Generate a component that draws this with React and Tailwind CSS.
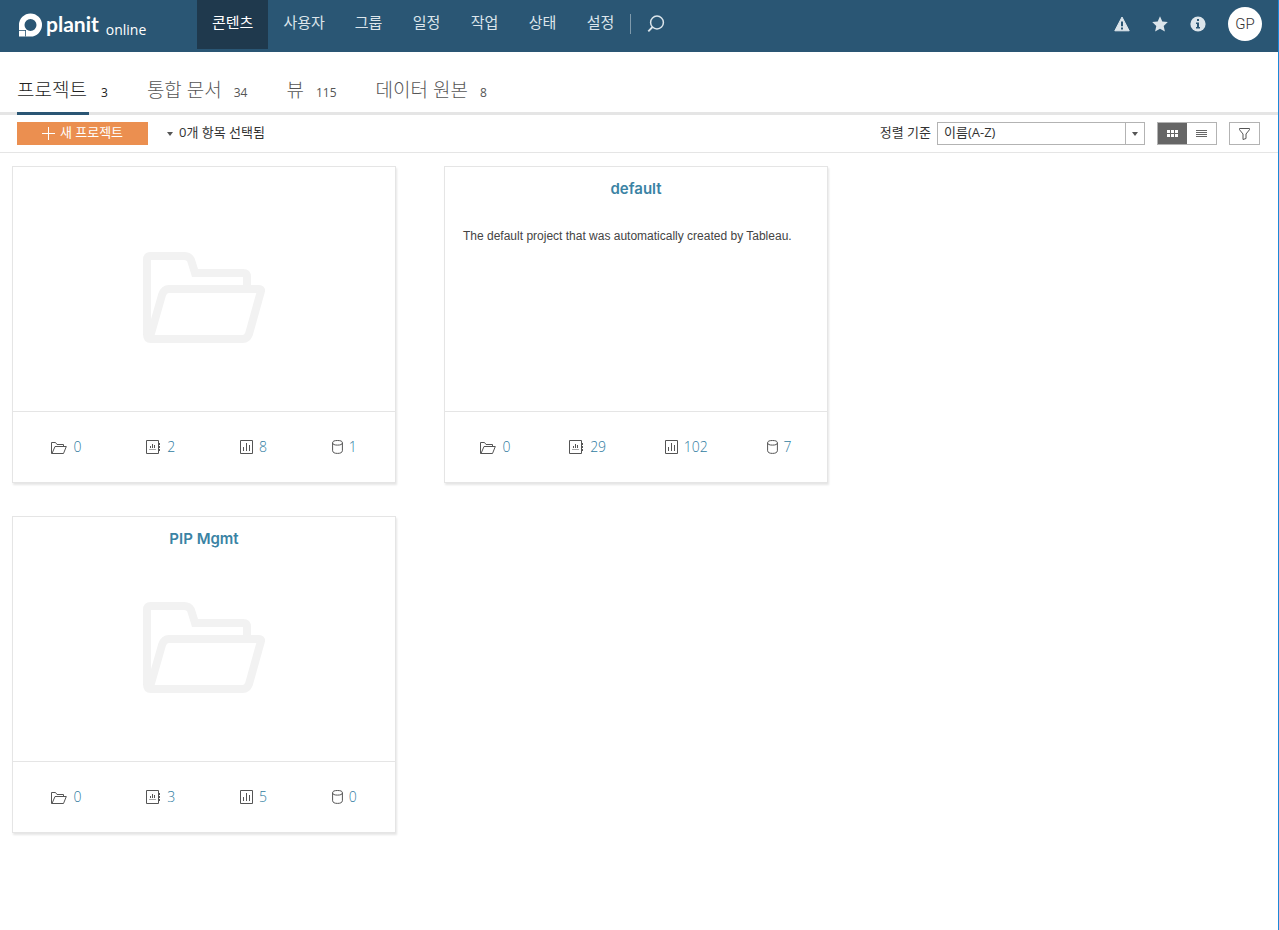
import { useState } from 'react'
import clsx from 'clsx'

/* ── Data ── */

const NAV = ['콘텐츠', '사용자', '그룹', '일정', '작업', '상태', '설정']

const TABS = [
  { label: '프로젝트', count: 3 },
  { label: '통합 문서', count: 34 },
  { label: '뷰', count: 115 },
  { label: '데이터 원본', count: 8 },
]

const PROJECTS = [
  { id: 1, name: '', folders: 0, workbooks: 2, views: 8, sources: 1 },
  {
    id: 2,
    name: 'default',
    description: 'The default project that was automatically created by Tableau.',
    folders: 0,
    workbooks: 29,
    views: 102,
    sources: 7,
  },
  { id: 3, name: 'PIP Mgmt', folders: 0, workbooks: 3, views: 5, sources: 0 },
]

/* ── Icons ── */

function LogoMark() {
  return (
    <svg width="25" height="24" viewBox="0 0 25 24" aria-hidden="true">
      <path
        fill="#fff"
        fillRule="evenodd"
        d="M12.500.500a11.500 11.500 0 0 1 0 23H1V12A11.500 11.500 0 0 1 12.500.500ZM12.500 6a6 6 0 0 0 0 12 6 6 0 0 0 0-12Z"
      />
      <path fill="none" stroke="#2a5674" strokeWidth=".8" d="M1 17.500h7M7.500 17v6.500" />
    </svg>
  )
}

function SearchIcon() {
  return (
    <svg width="18" height="18" viewBox="0 0 18 18" fill="none" stroke="#dce5eb" aria-hidden="true">
      <circle cx="10" cy="7.500" r="6.400" strokeWidth="1.500" />
      <path d="M5.500 12 1.300 16.300" strokeWidth="1.800" />
    </svg>
  )
}

function AlertIcon() {
  return (
    <svg width="16" height="16" viewBox="0 0 16 16" aria-hidden="true">
      <path
        fill="#dce5eb"
        stroke="#dce5eb"
        strokeLinejoin="round"
        d="M8 1 15.200 14.800H.800Z"
      />
      <path stroke="#2a5674" strokeWidth="2" d="M8 5.500v4.800M8 11.600v1.900" />
    </svg>
  )
}

function StarIcon() {
  return (
    <svg width="16" height="16" viewBox="0 0 16 16" aria-hidden="true">
      <path
        fill="#dce5eb"
        d="m8 .300 2.300 5.200 5.500.600-4.100 3.800 1.200 5.700L8 12.700l-4.900 2.900 1.200-5.700L.200 6.100l5.500-.600Z"
      />
    </svg>
  )
}

function InfoIcon() {
  return (
    <svg width="16" height="16" viewBox="0 0 16 16" aria-hidden="true">
      <circle cx="8" cy="8" r="7.600" fill="#dce5eb" />
      <path fill="#2a5674" d="M7 3h2v2H7zM6 6.500h3V11h1v1.500H6V11h1V8H6z" />
    </svg>
  )
}

function CaretIcon() {
  return (
    <svg width="6" height="4" viewBox="0 0 6 4" aria-hidden="true">
      <path fill="#555" d="M0 0h6L3 4Z" />
    </svg>
  )
}

function PlusIcon() {
  return (
    <svg width="13" height="13" viewBox="0 0 13 13" aria-hidden="true">
      <path stroke="#fff" d="M6.500 0v13M0 6.500h13" />
    </svg>
  )
}

function GridIcon() {
  return (
    <svg width="11" height="7" viewBox="0 0 11 7" fill="currentColor" aria-hidden="true">
      <path d="M0 0h3v3H0zM4 0h3v3H4zM8 0h3v3H8zM0 4h3v3H0zM4 4h3v3H4zM8 4h3v3H8z" />
    </svg>
  )
}

function ListIcon() {
  return (
    <svg width="11" height="7" viewBox="0 0 11 7" fill="currentColor" aria-hidden="true">
      <path d="M0 0h11v1H0zM0 2h11v1H0zM0 4h11v1H0zM0 6h11v1H0z" />
    </svg>
  )
}

function FilterIcon() {
  return (
    <svg width="11" height="12" viewBox="0 0 11 12" fill="none" stroke="#555" aria-hidden="true">
      <path strokeLinejoin="round" d="M.500.500h10v1.200L7 6v4.500L4 11.500V6L.500 1.700Z" />
    </svg>
  )
}

function BigFolderIcon() {
  return (
    <svg
      width="123"
      height="92"
      viewBox="0 0 123 92"
      fill="none"
      stroke="#f2f2f2"
      strokeWidth="8"
      aria-hidden="true"
    >
      <path d="M4 83V8q0-4 4-4h33q5 0 7 4l4 13h48q4 0 4 4v9" />
      <path
        strokeLinejoin="round"
        d="M4 80v2q0 5 4 5h92q4 0 6-5l12-43q.500-2-2-2H26q-5 0-7 6L7 85"
      />
    </svg>
  )
}

function FolderIcon() {
  return (
    <svg width="16" height="14" viewBox="0 0 16 14" fill="none" stroke="#555" aria-hidden="true">
      <path
        strokeLinejoin="round"
        d="M.500 13.500v-11h4l1.500 2h6.500v2M.500 13.500h12L15.300 6.500H4L1 13.500"
      />
    </svg>
  )
}

function WorkbookIcon() {
  return (
    <svg width="15" height="14" viewBox="0 0 15 14" fill="none" stroke="#555" aria-hidden="true">
      <path d="M.500.500h12v13H.500z" />
      <path d="M4.500 6v2M6.500 4v4M8.500 5v3" />
      <path stroke="#aaa" d="M3 9.500h7" />
      <path d="M13.500 3v2M13.500 6v2M13.500 9v2" />
    </svg>
  )
}

function ViewIcon() {
  return (
    <svg width="13" height="14" viewBox="0 0 13 14" fill="none" stroke="#555" aria-hidden="true">
      <path d="M.500.500h12v13H.500zM3.500 7v4M6.500 3v8M9.500 5v6" />
    </svg>
  )
}

function DataSourceIcon() {
  return (
    <svg width="11" height="14" viewBox="0 0 11 14" fill="none" stroke="#555" aria-hidden="true">
      <ellipse cx="5.500" cy="2.800" rx="4.900" ry="2.300" />
      <path d="M.600 2.800v8q.400 2.600 4.900 2.600t4.900-2.600v-8" />
    </svg>
  )
}

/* ── Header ── */

function Header() {
  return (
    <header className="flex h-[52px] items-start justify-between bg-[#2a5674] text-[#dce5eb]">
      <div className="flex h-full items-start">
        <a href="#home" className="flex w-[197px] items-start pt-[13px] pl-[18px] text-white">
          <LogoMark />
          <span className="pl-[3px] font-['Lato'] text-[21px] leading-[22px] font-bold">planit</span>
          <span className="pt-[6px] pl-[7px] font-['Open_Sans'] text-[14px] leading-[22px]">
            online
          </span>
        </a>
        <nav className="flex">
          {NAV.map((item, i) => (
            <a
              key={item}
              href="#nav"
              aria-current={i === 0 ? 'page' : undefined}
              className={clsx(
                'h-[49px] min-w-[58px] px-[15px] pt-3 text-[15px] leading-[20px]',
                i === 0 && 'bg-[#1f394d] text-white'
              )}
            >
              {item}
            </a>
          ))}
        </nav>
        <div className="mt-[14px] h-5 w-px bg-[#7f9aac]" />
        <button type="button" aria-label="검색" className="mt-[15px] ml-4">
          <SearchIcon />
        </button>
      </div>

      <div className="flex items-center gap-[22px] pt-[7px] pr-4">
        <button type="button" aria-label="경고">
          <AlertIcon />
        </button>
        <button type="button" aria-label="즐겨찾기">
          <StarIcon />
        </button>
        <button type="button" aria-label="정보">
          <InfoIcon />
        </button>
        <button
          type="button"
          className="size-[34px] rounded-full bg-white font-['Roboto'] text-[15px] font-light text-[#333]"
        >
          GP
        </button>
      </div>
    </header>
  )
}

/* ── Tabs ── */

function Tabs() {
  return (
    <nav className="flex h-[63px] gap-[39px] border-b-3 border-[#e5e5e5] pl-[17px]">
      {TABS.map((tab, i) => (
        <a
          key={tab.label}
          href="#tab"
          aria-current={i === 0 ? 'page' : undefined}
          className={clsx('flex h-[63px] items-start', i === 0 ? 'text-[#222]' : 'text-[#555]')}
        >
          <span
            className={clsx(
              'h-full pt-[25px] text-[19px] leading-[26px] font-light',
              i === 0 && 'min-w-[72px] border-b-3 border-[#2a5674]'
            )}
          >
            {tab.label}
          </span>
          <span className="pt-[31px] pl-3 text-[12px] leading-[20px]">{tab.count}</span>
        </a>
      ))}
    </nav>
  )
}

/* ── Toolbar ── */

function Toolbar() {
  const [view, setView] = useState('grid')

  const viewClass = (name) =>
    clsx(
      'flex flex-1 items-center justify-center',
      view === name ? 'bg-[#666] text-white' : 'text-[#666]'
    )

  return (
    <div className="flex h-[38px] items-center justify-between border-b border-[#e5e5e5] pr-[18px] pl-[17px] text-[13px] text-[#333]">
      <div className="flex items-center">
        <button
          type="button"
          className="flex h-[23px] w-[131px] items-center justify-center gap-[5px] bg-[#eb8f50] leading-[20px] text-white"
        >
          <PlusIcon />
          <span className="pb-[3px]">새 프로젝트</span>
        </button>
        <button type="button" className="ml-[19px] flex items-center gap-[6px] leading-[20px]">
          <CaretIcon />
          <span className="pb-[3px]">0개 항목 선택됨</span>
        </button>
      </div>

      <div className="flex items-center">
        <label htmlFor="sort" className="pr-[6px] pb-[3px] leading-[20px]">
          정렬 기준
        </label>
        <div className="relative h-[23px] w-[208px] border border-[#b3b3b3]">
          <select
            id="sort"
            className="block h-full w-full appearance-none bg-transparent pb-[3px] pl-[6px] leading-[18px] outline-none"
          >
            <option>이름(A-Z)</option>
            <option>이름(Z-A)</option>
          </select>
          <span className="pointer-events-none absolute inset-y-0 right-0 flex w-[19px] items-center justify-center border-l border-[#b3b3b3]">
            <CaretIcon />
          </span>
        </div>

        <div className="ml-3 flex h-[23px] w-[60px] border border-[#b3b3b3]">
          <button
            type="button"
            aria-label="그리드 보기"
            aria-pressed={view === 'grid'}
            onClick={() => setView('grid')}
            className={viewClass('grid')}
          >
            <GridIcon />
          </button>
          <button
            type="button"
            aria-label="목록 보기"
            aria-pressed={view === 'list'}
            onClick={() => setView('list')}
            className={viewClass('list')}
          >
            <ListIcon />
          </button>
        </div>

        <button
          type="button"
          aria-label="필터"
          className="ml-3 flex h-[23px] w-[31px] items-center justify-center border border-[#b3b3b3]"
        >
          <FilterIcon />
        </button>
      </div>
    </div>
  )
}

/* ── Project cards ── */

function Stat({ icon, label, value }) {
  return (
    <a href="#stat" aria-label={`${label} ${value}`} className="flex items-center gap-[6px]">
      {icon}
      <span>{value}</span>
    </a>
  )
}

function ProjectCard({ project }) {
  return (
    <article className="flex h-[317px] flex-col border border-[#e5e5e5] bg-white shadow-[1px_2px_2px_rgba(0,0,0,0.1)]">
      <div className="flex flex-1 flex-col">
        <h2 className="h-[44px] pt-3 text-center font-['Inter'] text-[15px] leading-[20px] font-semibold text-[#3a83a4]">
          {project.name && <a href="#project">{project.name}</a>}
        </h2>
        {project.description ? (
          <p className="px-[18px] pt-4 font-['Liberation_Sans'] text-[12px] leading-[18px] text-[#444]">
            {project.description}
          </p>
        ) : (
          <div className="flex justify-center pt-[41px]">
            <BigFolderIcon />
          </div>
        )}
      </div>
      <div className="flex h-[71px] items-center justify-around border-t border-[#e5e5e5] px-[6px] pb-px font-['Open_Sans'] text-[14px] leading-[20px] font-light text-[#2f7c9f]">
        <Stat icon={<FolderIcon />} label="프로젝트" value={project.folders} />
        <Stat icon={<WorkbookIcon />} label="통합 문서" value={project.workbooks} />
        <Stat icon={<ViewIcon />} label="뷰" value={project.views} />
        <Stat icon={<DataSourceIcon />} label="데이터 원본" value={project.sources} />
      </div>
    </article>
  )
}

export default function App() {
  return (
    <div className="min-h-screen border-r border-[#1e88d8] bg-white font-['Open_Sans','Noto_Sans_CJK_KR',sans-serif]">
      <Header />
      <Tabs />
      <Toolbar />
      <main className="grid grid-cols-[repeat(auto-fill,384px)] gap-x-12 gap-y-[33px] py-[13px] pr-5 pl-3">
        {PROJECTS.map((project) => (
          <ProjectCard key={project.id} project={project} />
        ))}
      </main>
    </div>
  )
}
